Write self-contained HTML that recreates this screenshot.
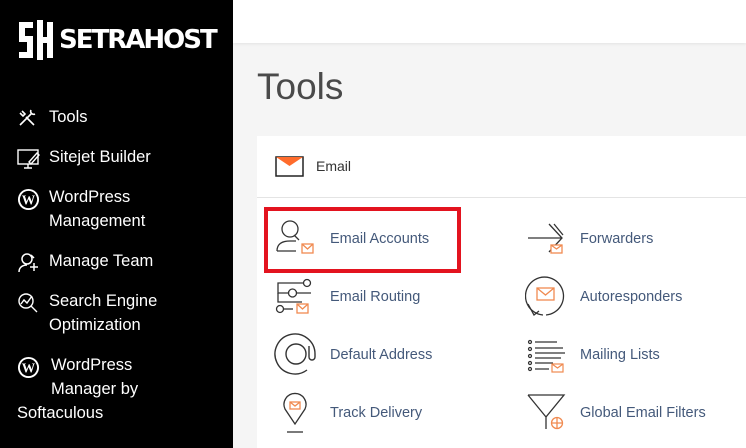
<!DOCTYPE html>
<html><head><style>
*{margin:0;padding:0;box-sizing:border-box}
body{width:746px;height:448px;overflow:hidden;font-family:"Liberation Sans",sans-serif;background:#f5f5f5;position:relative}
#side{position:absolute;left:0;top:0;width:233px;height:448px;background:#000;color:#fff}
.logo{position:absolute;left:17px;top:18px;font:900 26px "DejaVu Sans",sans-serif;letter-spacing:-2px;display:flex;align-items:center}
.nav{position:absolute;left:17px;font-size:16.5px;line-height:24px;color:#fff}
.nav svg{position:absolute;left:0;top:3px}
.nav span{display:block;padding-left:32px}
#top{position:absolute;left:233px;top:0;width:513px;height:43px;background:#fff;box-shadow:0 1px 3px rgba(0,0,0,.08)}
h1{position:absolute;left:257px;top:66px;font:300 37px "Liberation Sans",sans-serif;color:#4a4a4a}
#panel{position:absolute;left:257px;top:136px;width:489px;height:312px;background:#fff}
.hdr{height:62px;border-bottom:1px solid #e4e4e4;position:relative}
.hdr span{position:absolute;left:59px;top:22px;font-size:14px;color:#333}
.it{position:absolute;font-size:14.5px;color:#44597a}
.ic{position:absolute}
</style></head><body>
<div id="side">
<div class="logo"><svg width="38" height="44" viewBox="0 0 38 44"><path d="M2 4h14v6H8v8h8v22H2v-6h8v-10H2z M20 2h6v17h4V4h6v36h-6V25h-4v17h-6z" fill="#fff"/></svg><span style="margin-left:4px">SETRAHOST</span></div>
<div class="nav" style="top:105px"><svg width="20" height="20" viewBox="0 0 20 20" fill="none" stroke="#fff" stroke-width="1.6"><path d="M3 17L15 5M5 3l3 3-2 2-3-3M17 17L9 9M14 2a3 3 0 0 0 4 4"/></svg><span>Tools</span></div>
<div class="nav" style="top:145px"><svg width="24" height="22" viewBox="0 0 24 22" fill="none" stroke="#fff" stroke-width="1.4"><rect x="1" y="2" width="20" height="14"/><path d="M7 20h8M11 16v4M12 14l8-9 2 2-8 9z"/></svg><span>Sitejet Builder</span></div>
<div class="nav" style="top:185px"><svg width="23" height="23" viewBox="0 0 24 24"><circle cx="12" cy="12" r="11" fill="#fff"/><circle cx="12" cy="12" r="9" fill="#000"/><text x="12" y="17" font-size="14" font-weight="bold" fill="#fff" text-anchor="middle" font-family="Liberation Serif">W</text></svg><span>WordPress<br>Management</span></div>
<div class="nav" style="top:249px"><svg width="22" height="22" viewBox="0 0 22 22" fill="none" stroke="#fff" stroke-width="1.5"><circle cx="10" cy="7" r="5"/><path d="M2 20c0-5 4-7 8-7M13 15h8M17 11v8M14 3l3 3"/></svg><span>Manage Team</span></div>
<div class="nav" style="top:289px"><svg width="22" height="22" viewBox="0 0 22 22" fill="none" stroke="#fff" stroke-width="1.4"><circle cx="9" cy="9" r="7"/><path d="M14 14l6 6M4 12l3-4 3 3 5-7"/></svg><span>Search Engine<br>Optimization</span></div>
<div class="nav" style="top:353px;left:17px"><svg width="23" height="23" viewBox="0 0 24 24" style="top:3px"><circle cx="12" cy="12" r="11" fill="#fff"/><circle cx="12" cy="12" r="9" fill="#000"/><text x="12" y="17" font-size="14" font-weight="bold" fill="#fff" text-anchor="middle" font-family="Liberation Serif">W</text></svg><span style="padding-left:34px">WordPress<br>Manager by</span><span style="padding-left:0">Softaculous</span></div>
</div>
<div id="top"></div>
<h1>Tools</h1>
<div id="panel">
<div class="hdr"><svg class="ic" style="left:18px;top:20px" width="30" height="22" viewBox="0 0 30 22"><rect x="1" y="1" width="27" height="19" fill="#fff" stroke="#222" stroke-width="1.5"/><path d="M1 1h27L14.5 10z" fill="#ff6c2c"/></svg><span>Email</span></div>
</div>
<div style="position:absolute;left:264px;top:207px;width:197px;height:66px;border:4px solid #e3131f"></div>
<svg class="ic" style="left:275px;top:220px" width="42" height="36" viewBox="0 0 42 36" fill="none" stroke="#333" stroke-width="1.3"><circle cx="15" cy="9" r="8"/><path d="M19 15l5 5M2 31c0-8 6-10 13-10h6M2 31h19"/><rect x="27" y="24" width="11" height="9" stroke="#f08a50"/><path d="M27 24l5.5 5 5.5-5" stroke="#f08a50"/></svg>
<svg class="ic" style="left:275px;top:278px" width="42" height="38" viewBox="0 0 42 38" fill="none" stroke="#333" stroke-width="1.3"><circle cx="32" cy="5" r="3.5"/><path d="M28 5H3v10h10M22 15h14"/><circle cx="17.5" cy="15" r="4"/><path d="M3 15v9h24"/><circle cx="5" cy="31" r="3.5"/><path d="M9 31h9"/><rect x="22" y="26" width="11" height="9" stroke="#f08a50"/><path d="M22 26l5.5 5 5.5-5" stroke="#f08a50"/></svg>
<svg class="ic" style="left:274px;top:333px" width="44" height="44" viewBox="0 0 44 44" fill="none" stroke="#333" stroke-width="1.4"><path d="M33 37A20 20 0 1 1 41 21v3a3 3 0 0 1-6 0V13"/><circle cx="22" cy="21" r="10"/></svg>
<svg class="ic" style="left:283px;top:392px" width="24" height="42" viewBox="0 0 24 42" fill="none" stroke="#333" stroke-width="1.3"><path d="M12 32L2 17A11 11 0 1 1 22 17z"/><path d="M4 40h16"/><rect x="7" y="10" width="10" height="7" stroke="#f08a50"/><path d="M7 10l5 4 5-4" stroke="#f08a50"/></svg>
<svg class="ic" style="left:527px;top:222px" width="42" height="34" viewBox="0 0 42 34" fill="none" stroke="#333" stroke-width="1.3"><path d="M1 16h34M22 2l13 14-13 14M27 2l9 11"/><rect x="24" y="23" width="11" height="8" fill="#fff" stroke="#f08a50"/><path d="M24 23l5.5 4 5.5-4" stroke="#f08a50"/></svg>
<svg class="ic" style="left:525px;top:275px" width="42" height="42" viewBox="0 0 42 42" fill="none" stroke="#333" stroke-width="1.3"><path d="M18 40A19 19 0 1 1 21 40"/><path d="M3 29l6 11 5-4"/><rect x="12" y="13" width="17" height="12" stroke="#f08a50"/><path d="M12 13l8.5 7 8.5-7" stroke="#f08a50"/></svg>
<svg class="ic" style="left:527px;top:339px" width="42" height="36" viewBox="0 0 42 36" fill="none" stroke="#333" stroke-width="1.2"><circle cx="3" cy="3" r="1.5"/><circle cx="3" cy="10" r="1.5"/><circle cx="3" cy="17" r="1.5"/><circle cx="3" cy="24" r="1.5"/><circle cx="3" cy="30" r="1.5"/><path d="M8 3h22M8 9h28M8 14h30M8 19h26M8 24h18M8 30h14"/><rect x="25" y="25" width="11" height="8" fill="#fff" stroke="#f08a50"/><path d="M25 25l5.5 4 5.5-4" stroke="#f08a50"/></svg>
<svg class="ic" style="left:527px;top:393px" width="42" height="38" viewBox="0 0 42 38" fill="none" stroke="#333" stroke-width="1.3"><path d="M1 2h36L19 24v12M1 2l18 22"/><circle cx="30" cy="30" r="5.5" stroke="#f08a50"/><path d="M24.5 30h11M30 24.5v11" stroke="#f08a50"/></svg>
<div class="it" style="left:330px;top:231px">Email Accounts</div>
<div class="it" style="left:330px;top:289px">Email Routing</div>
<div class="it" style="left:330px;top:347px">Default Address</div>
<div class="it" style="left:330px;top:405px">Track Delivery</div>
<div class="it" style="left:580px;top:231px">Forwarders</div>
<div class="it" style="left:580px;top:289px">Autoresponders</div>
<div class="it" style="left:580px;top:347px">Mailing Lists</div>
<div class="it" style="left:580px;top:405px">Global Email Filters</div>
</body></html>
